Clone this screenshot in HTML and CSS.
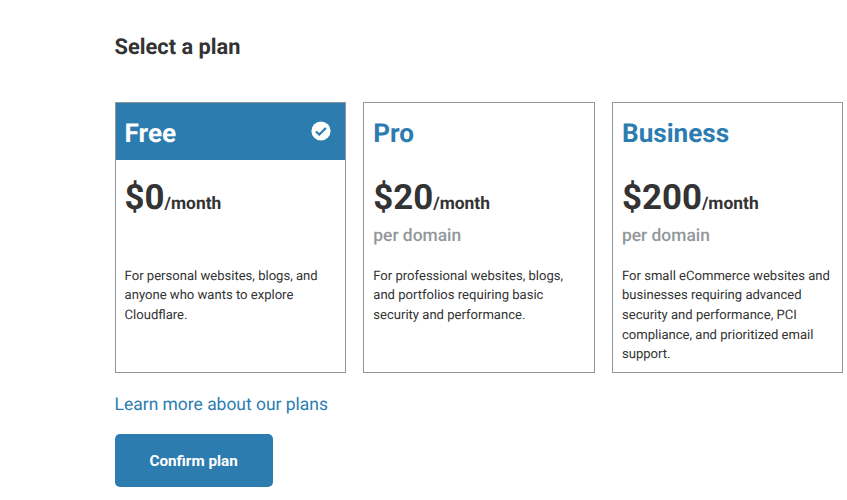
FILE: index.html
```html
<!DOCTYPE html>
<html lang="en">
<head>
<meta charset="utf-8">
<title>Select a plan</title>
<link rel="stylesheet" href="styles.css">
</head>
<body>
<main class="page">
  <h1 class="title">Select a plan</h1>
  <div class="plans">
    <section class="plan selected">
      <header class="plan-head"><h2>Free</h2>
        <svg class="check" viewBox="0 0 20 20"><circle cx="10" cy="10" r="9.6" fill="#fff"/><path d="M4.9 10.5 8.3 13.6 14.9 7" fill="none" stroke="#2c7cb0" stroke-width="2.2"/></svg>
      </header>
      <div class="price"><span class="amount">$0</span><span class="period">/month</span></div>
      <div class="unit"></div>
      <p class="desc">For personal websites, blogs, and<br>anyone who wants to explore<br>Cloudflare.</p>
    </section>
    <section class="plan">
      <header class="plan-head"><h2>Pro</h2></header>
      <div class="price"><span class="amount">$20</span><span class="period">/month</span></div>
      <div class="unit">per domain</div>
      <p class="desc">For professional websites, blogs,<br>and portfolios requiring basic<br>security and performance.</p>
    </section>
    <section class="plan">
      <header class="plan-head"><h2>Business</h2></header>
      <div class="price"><span class="amount">$200</span><span class="period">/month</span></div>
      <div class="unit">per domain</div>
      <p class="desc">For small eCommerce websites and<br>businesses requiring advanced<br>security and performance, PCI<br>compliance, and prioritized email<br>support.</p>
    </section>
  </div>
  <a class="more" href="#">Learn more about our plans</a>
  <button class="confirm">Confirm plan</button>
</main>
</body>
</html>
```
FILE: styles.css
```css
* { box-sizing: border-box; margin: 0; }
body { background: #fff; color: #333; font-family: "Roboto", sans-serif; text-rendering: geometricPrecision; }
.page { padding: 33px 0 0 114.6px; display: flex; flex-direction: column; align-items: flex-start; }
.title { font-size: 21.8px; line-height: 30px; font-weight: 700; }
.plans { display: grid; grid-template-columns: repeat(3, 231.3px); gap: 17.4px; margin-top: 39px; }
.plan { height: 271px; border: 1px solid #92979b; }
.plan-head { height: 57px; padding: 4px 13.6px 0 9px; display: flex; align-items: center; justify-content: space-between; color: #2c7cb0; }
.plan-head h2 { font-size: 26.13px; line-height: 36px; font-weight: 700; }
.selected .plan-head { background: #2c7cb0; color: #fff; }
.check { width: 20px; height: 20px; margin-top: -5px; }
.price { padding: 17px 9px 0; height: 63px; line-height: 42px; white-space: nowrap; font-weight: 700; }
.amount { font-size: 34.84px; }
.period { font-size: 17.42px; }
.unit { height: 43.9px; padding: 1px 0 0 9px; color: #92979b; font-size: 17.42px; line-height: 24px; font-weight: 500; }
.desc { padding-left: 9px; font-size: 13.07px; line-height: 19.6px; white-space: nowrap; }
.more { margin-top: 19px; font-size: 17.45px; line-height: 26px; color: #2c7cb0; text-decoration: none; }
.confirm { margin-top: 16px; width: 158px; height: 53px; padding: 0; border: 0; border-radius: 5px; background: #2c7cb0; color: #fff; font: 700 15.25px "Roboto", sans-serif; }
```
